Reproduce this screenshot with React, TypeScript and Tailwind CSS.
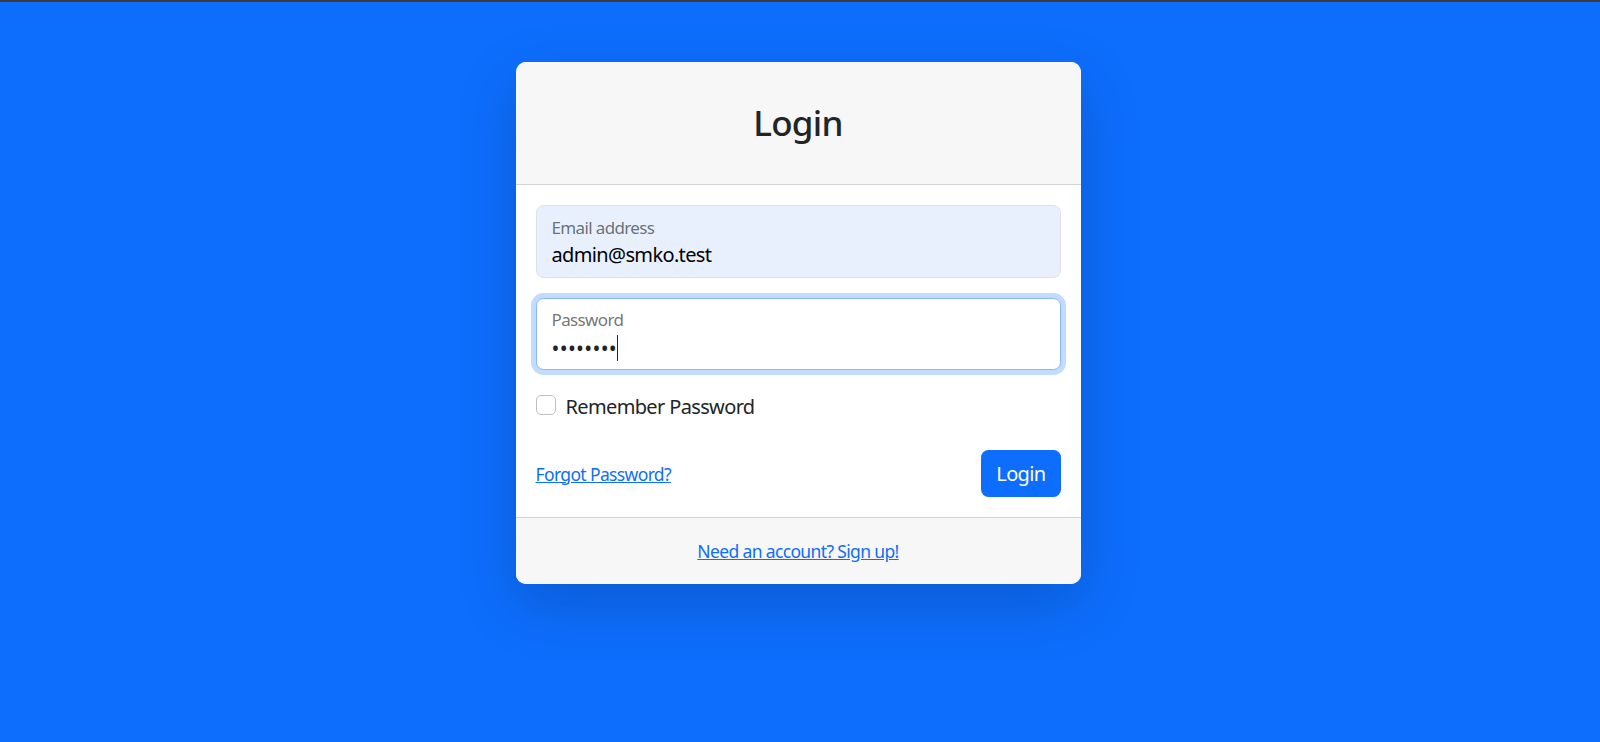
export default function App() {
  return (
    <div
      className="min-h-screen bg-[#0d6efd] border-t-2 border-[#3c3c3c] text-[#212529] tracking-[-0.04em]"
      style={{ fontFamily: '"Noto Sans", "Open Sans", Arial, sans-serif' }}
    >
      <div className="flex justify-center pt-[60px] pr-[4px]">
        <div className="w-[565px] rounded-[10px] bg-white shadow-[0_20px_60px_rgba(0,0,0,0.175)] overflow-hidden">
          {/* header */}
          <div className="bg-[#f7f7f7] border-b border-[#d3d3d3] px-5 py-[10px]">
            <h3 className="my-[30px] text-center text-[35px] leading-[42px] font-medium tracking-[-0.02em]">Login</h3>
          </div>

          {/* body */}
          <div className="p-5">
            <div className="h-[72.5px] rounded-[7.5px] border border-[#dee2e6] bg-[#e8f0fe] px-[15px]">
              <div className="pt-[8.5px] text-[17px] leading-[25.5px] text-[#212529]/65">Email address</div>
              <div className="text-[20px] leading-[30px] text-black">admin@smko.test</div>
            </div>

            <div className="mt-5 h-[72.5px] rounded-[7.5px] border border-[#86b7fe] bg-white px-[15px] shadow-[0_0_0_5px_rgba(13,110,253,0.25)]">
              <div className="pt-[8.5px] text-[17px] leading-[25.5px] text-[#212529]/65">Password</div>
              <div className="flex items-center h-[30px]">
                <span className="text-[21px] leading-[30px] tracking-[0.3px] text-[#212529]">••••••••</span>
                <span className="w-[1px] h-[26px] bg-[#212529]" />
              </div>
            </div>

            <label className="mt-5 flex items-start h-[30px]">
              <span className="mt-[5px] w-5 h-5 rounded-[5px] border border-[#bfbfbf] bg-white" />
              <span className="ml-[10px] text-[20px] leading-[30px] pt-[2px]">Remember Password</span>
            </label>

            <div className="mt-[30px] flex items-center justify-between">
              <a href="#" className="text-[17.5px] leading-[26px] text-[#0d6efd] underline">
                Forgot Password?
              </a>
              <button className="rounded-[7.5px] bg-[#0d6efd] px-[15px] py-[8.5px] text-[20px] leading-[30px] text-white">
                Login
              </button>
            </div>
          </div>

          {/* footer */}
          <div className="bg-[#f7f7f7] border-t border-[#d3d3d3] py-5 text-center">
            <a href="#" className="text-[17.5px] leading-[26.25px] text-[#0d6efd] underline">
              Need an account? Sign up!
            </a>
          </div>
        </div>
      </div>
    </div>
  )
}
